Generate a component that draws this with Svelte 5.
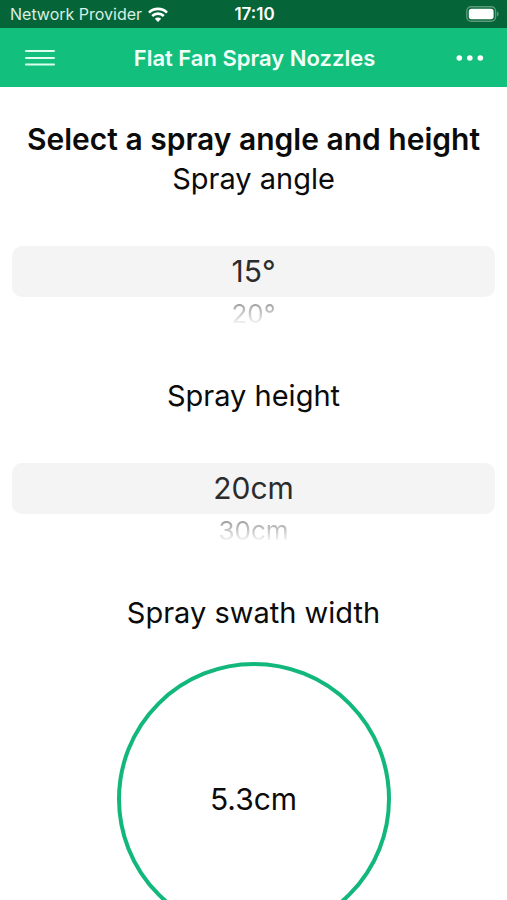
<script lang="ts">
	const angles = [15, 20, 25, 30, 40, 50, 65, 80, 95, 110];
	const heights = [20, 30, 40, 50, 60, 70, 80, 90, 100];

	let angleIndex = $state(0);
	let heightIndex = $state(0);

	let swath = $derived(
		2 * heights[heightIndex] * Math.tan((angles[angleIndex] * Math.PI) / 360)
	);
</script>

{#snippet picker(label: string, values: number[], unit: string, index: number, select: (i: number) => void)}
	<section class="field">
		<h2>{label}</h2>
		<div class="wheel" role="group" aria-label={label}>
			<div class="slot before">
				{#if index > 0}
					<button class="near" onclick={() => select(index - 1)}>{values[index - 1]}{unit}</button>
				{/if}
			</div>
			<div class="current" aria-live="polite">{values[index]}{unit}</div>
			<div class="slot after">
				{#if index < values.length - 1}
					<button class="near" onclick={() => select(index + 1)}>{values[index + 1]}{unit}</button>
				{/if}
			</div>
		</div>
	</section>
{/snippet}

<div class="app">
	<div class="status">
		<div class="carrier">
			<span>Network Provider</span>
			<svg width="20" height="15" viewBox="0 0 20 15" aria-hidden="true">
				<g fill="none" stroke="#fff" stroke-width="2.6">
					<path d="M1 5.6a12.8 12.8 0 0 1 18 0" />
					<path d="M4.2 9a8.2 8.2 0 0 1 11.6 0" />
				</g>
				<path d="M10 15l-3.2-3.3a4.6 4.6 0 0 1 6.4 0z" fill="#fff" />
			</svg>
		</div>
		<time>17:10</time>
		<svg class="battery" width="33" height="16" viewBox="0 0 33 16" aria-hidden="true">
			<rect x=".8" y=".8" width="28.8" height="14.4" rx="4.4" fill="none" stroke="#5b9a7a" stroke-width="1.4" />
			<rect x="2.8" y="2.8" width="24.8" height="10.4" rx="2.6" fill="#fff" />
			<path d="M31 5.6q1.7.8 1.7 2.4T31 10.4z" fill="#5b9a7a" />
		</svg>
	</div>

	<header>
		<button class="icon" aria-label="Menu">
			<svg width="30" height="18" viewBox="0 0 30 18">
				<path d="M1 2h28M1 9h28M1 15.5h28" stroke="#dcfff0" stroke-width="2" stroke-linecap="round" />
			</svg>
		</button>
		<h1>Flat Fan Spray Nozzles</h1>
		<button class="icon more" aria-label="More options">
			<svg width="28" height="6" viewBox="0 0 28 6" fill="#fff">
				<circle cx="3.3" cy="3" r="2.8" />
				<circle cx="13.8" cy="3" r="2.8" />
				<circle cx="24.3" cy="3" r="2.8" />
			</svg>
		</button>
	</header>

	<main>
		<p class="intro">Select a spray angle and height</p>
		{@render picker("Spray angle", angles, "°", angleIndex, (i) => (angleIndex = i))}
		{@render picker("Spray height", heights, "cm", heightIndex, (i) => (heightIndex = i))}
		<section class="result">
			<h2>Spray swath width</h2>
			<output class="dial">{swath.toFixed(1)}cm</output>
		</section>
	</main>
</div>

<style>
	:global(body) {
		background: #fff;
	}

	.app {
		display: flex;
		flex-direction: column;
		height: 100vh;
		font-family: Inter, "Liberation Sans", sans-serif;
		color: #0b0b0b;
	}

	.status {
		display: grid;
		grid-template-columns: 1fr auto 1fr;
		align-items: center;
		flex-shrink: 0;
		height: 28px;
		padding: 0 8px 0 10px;
		background: #066439;
		color: #fff;
		font-size: 16px;
		line-height: 28px;
	}

	.carrier {
		display: flex;
		align-items: center;
		gap: 6px;
		color: #d8efe3;
	}

	time {
		font-size: 17px;
		font-weight: 600;
	}

	.battery {
		justify-self: end;
	}

	header {
		display: grid;
		grid-template-columns: 1fr auto 1fr;
		align-items: center;
		flex-shrink: 0;
		height: 59px;
		padding: 0 23px 0 25px;
		background: #12bf7c;
		color: #f0fff8;
	}

	h1 {
		margin: 0;
		font-size: 22px;
		font-weight: 600;
	}

	button {
		margin: 0;
		padding: 0;
		border: none;
		background: none;
		font: inherit;
		cursor: pointer;
	}

	.icon {
		display: flex;
		align-items: center;
		justify-self: start;
		height: 44px;
	}

	.more {
		justify-self: end;
	}

	main {
		flex: 1;
		min-height: 0;
		overflow-y: auto;
		scrollbar-width: none;
		padding: 32px 12px;
		text-align: center;
		font-size: 30px;
		line-height: 40px;
	}

	.intro {
		margin: 0 -12px;
		font-weight: 600;
	}

	h2 {
		margin: 0;
		font-size: 29px;
		font-weight: 400;
	}

	.field {
		padding-bottom: 45px;
	}

	.current {
		border-radius: 10px;
		background: #f4f4f4;
		color: #2c2c2c;
		line-height: 51px;
	}

	.slot {
		display: flex;
		justify-content: center;
		color: #a0a0a0;
		font-size: 26px;
		line-height: 34px;
	}

	.before {
		align-items: flex-end;
		height: 47px;
		mask-image: linear-gradient(to top, #000 20%, transparent 80%);
	}

	.after {
		height: 34px;
		mask-image: linear-gradient(to bottom, #000 20%, transparent 85%);
	}

	.near {
		color: inherit;
	}

	.dial {
		display: flex;
		align-items: center;
		justify-content: center;
		box-sizing: border-box;
		width: 274px;
		height: 274px;
		margin: 29px auto 0;
		border: 4px solid #12b77b;
		border-radius: 50%;
	}
</style>
